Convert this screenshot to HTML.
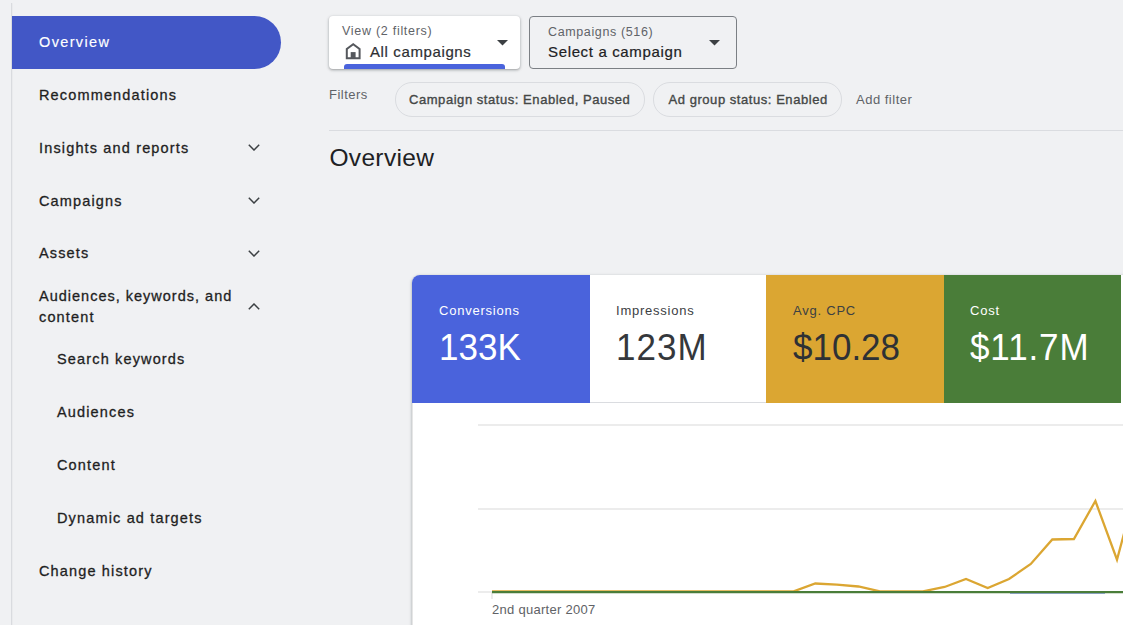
<!DOCTYPE html>
<html><head><meta charset="utf-8">
<style>
html,body{margin:0;padding:0;width:1123px;height:625px;overflow:hidden;background:#f0f1f3;font-family:"Liberation Sans",sans-serif;}
.a{position:absolute;white-space:nowrap;line-height:20px;}
#sideline{position:absolute;left:11px;top:2.5px;width:1px;height:623px;background:#d9dbdf;box-shadow:1px 0 1px rgba(0,0,0,0.03);}
#pill{position:absolute;left:12px;top:16px;width:269px;height:53px;background:#4257c6;border-radius:0 26.5px 26.5px 0;}
.nav{font-size:14.5px;letter-spacing:1.15px;color:#1f1f1f;-webkit-text-stroke:0.3px currentColor;}
.chev{position:absolute;left:248px;width:12px;height:7px;}
.card{position:absolute;background:#fff;}
</style></head><body>
<div id="sideline"></div>
<div id="pill"></div>
<div class="a nav" style="left:39px;top:32.3px;color:#fff;letter-spacing:1.35px;-webkit-text-stroke:0.15px #fff;">Overview</div>
<div class="a nav" style="left:39px;top:85.4px;">Recommendations</div>
<div class="a nav" style="left:39px;top:138px;">Insights and reports</div>
<div class="a nav" style="left:39px;top:190.7px;">Campaigns</div>
<div class="a nav" style="left:39px;top:243.4px;">Assets</div>
<div class="a nav" style="left:39px;top:285.7px;letter-spacing:1.0px;">Audiences, keywords, and</div>
<div class="a nav" style="left:39px;top:307.3px;">content</div>
<div class="a nav" style="left:57px;top:349px;">Search keywords</div>
<div class="a nav" style="left:57px;top:402.2px;">Audiences</div>
<div class="a nav" style="left:57px;top:455px;">Content</div>
<div class="a nav" style="left:57px;top:507.5px;">Dynamic ad targets</div>
<div class="a nav" style="left:39px;top:561.3px;">Change history</div>

<svg class="chev" style="top:144px" viewBox="0 0 12 7"><path d="M0.8 0.8 L6 6 L11.2 0.8" fill="none" stroke="#3c4043" stroke-width="1.5"/></svg>
<svg class="chev" style="top:197px" viewBox="0 0 12 7"><path d="M0.8 0.8 L6 6 L11.2 0.8" fill="none" stroke="#3c4043" stroke-width="1.5"/></svg>
<svg class="chev" style="top:250px" viewBox="0 0 12 7"><path d="M0.8 0.8 L6 6 L11.2 0.8" fill="none" stroke="#3c4043" stroke-width="1.5"/></svg>
<svg class="chev" style="top:303px" viewBox="0 0 12 7"><path d="M0.8 6.2 L6 1 L11.2 6.2" fill="none" stroke="#3c4043" stroke-width="1.5"/></svg>

<!-- dropdown 1 -->
<div style="position:absolute;left:329px;top:16px;width:191px;height:53px;background:#fff;border-radius:4px;box-shadow:0 1px 2px rgba(60,64,67,.3),0 1px 3px 1px rgba(60,64,67,.15);overflow:hidden;">
  <div style="position:absolute;left:15px;top:48px;width:161px;height:8px;background:#4a63dc;border-radius:3px 3px 0 0;"></div>
</div>
<div class="a" style="left:342px;top:21.3px;font-size:12.5px;color:#5f6368;letter-spacing:0.72px;">View (2 filters)</div>
<svg style="position:absolute;left:345px;top:43px;width:16px;height:17px" viewBox="0 0 16 17"><path d="M1.8 15.2 V6 L8.2 1.3 L14.6 6 V15.2 Z" fill="none" stroke="#55585d" stroke-width="2" stroke-linejoin="miter"/><rect x="5.7" y="9.1" width="4.9" height="6.1" fill="#55585d"/></svg>
<div class="a" style="left:370px;top:42.4px;font-size:15px;color:#2d2f33;letter-spacing:0.62px;-webkit-text-stroke:0.2px currentColor;">All campaigns</div>
<svg style="position:absolute;left:497px;top:40px;width:11px;height:6px" viewBox="0 0 11 6"><path d="M0 0 H11 L5.5 5.5 Z" fill="#3c4043"/></svg>

<!-- dropdown 2 -->
<div style="position:absolute;left:529px;top:16px;width:206px;height:51px;border:1px solid #7b7f84;border-radius:4px;"></div>
<div class="a" style="left:548px;top:22px;font-size:12.5px;color:#5f6368;letter-spacing:0.63px;">Campaigns (516)</div>
<div class="a" style="left:548px;top:41.6px;font-size:15px;color:#202124;letter-spacing:0.65px;-webkit-text-stroke:0.2px currentColor;">Select a campaign</div>
<svg style="position:absolute;left:709px;top:40px;width:11px;height:6px" viewBox="0 0 11 6"><path d="M0 0 H11 L5.5 5.5 Z" fill="#3c4043"/></svg>

<!-- filters -->
<div class="a" style="left:329px;top:84.5px;font-size:13px;color:#5f6368;letter-spacing:0.47px;">Filters</div>
<div style="position:absolute;left:395px;top:82px;width:248px;height:33px;border:1px solid #dadce0;border-radius:17px;"></div>
<div class="a" style="left:409px;top:90px;font-size:13px;color:#444746;letter-spacing:0.55px;-webkit-text-stroke:0.35px currentColor;">Campaign status: Enabled, Paused</div>
<div style="position:absolute;left:653px;top:82px;width:187px;height:33px;border:1px solid #dadce0;border-radius:17px;"></div>
<div class="a" style="left:668.5px;top:90px;font-size:13px;color:#444746;letter-spacing:0.55px;-webkit-text-stroke:0.35px currentColor;">Ad group status: Enabled</div>
<div class="a" style="left:856px;top:90px;font-size:13px;color:#5f6368;letter-spacing:0.5px;">Add filter</div>
<div style="position:absolute;left:329px;top:130px;width:794px;height:1px;background:#dadce0;"></div>

<div class="a" style="left:329.4px;top:143.8px;font-size:24.5px;color:#202124;letter-spacing:0.35px;line-height:28px;">Overview</div>

<!-- chart card -->
<div class="card" style="left:412px;top:275px;width:720px;height:360px;border-radius:8px 0 0 0;box-shadow:0 1px 2px rgba(60,64,67,.3),0 1px 3px 1px rgba(60,64,67,.15);overflow:hidden;">
  <div style="position:absolute;left:0;top:0;width:178px;height:128px;background:#4a63dc;"></div>
  <div style="position:absolute;left:178px;top:127px;width:176px;height:1px;background:#dadce0;"></div>
  <div style="position:absolute;left:0;top:128px;width:1px;height:300px;background:#e6e6e6;"></div>
  <div style="position:absolute;left:354px;top:0;width:178px;height:128px;background:#dba632;"></div>
  <div style="position:absolute;left:531.5px;top:0;width:177.5px;height:128px;background:#4a7d39;"></div>
</div>
<div class="a" style="left:439px;top:300.7px;font-size:13px;color:#fff;letter-spacing:0.77px;">Conversions</div>
<div class="a" style="left:439px;top:328px;font-size:35px;transform:scaleY(1.055);transform-origin:0 32px;color:#fff;line-height:40px;">133K</div>
<div class="a" style="left:616px;top:300.7px;font-size:13px;color:#3c4043;letter-spacing:0.77px;">Impressions</div>
<div class="a" style="left:616px;top:328px;font-size:35px;transform:scaleY(1.055);transform-origin:0 32px;color:#35383c;line-height:40px;letter-spacing:1px;">123M</div>
<div class="a" style="left:793px;top:300.7px;font-size:13px;color:#3c4043;letter-spacing:0.77px;">Avg. CPC</div>
<div class="a" style="left:793px;top:328px;font-size:35px;transform:scaleY(1.055);transform-origin:0 32px;color:#2e3135;line-height:40px;">$10.28</div>
<div class="a" style="left:970px;top:300.7px;font-size:13px;color:#fff;letter-spacing:0.77px;">Cost</div>
<div class="a" style="left:970px;top:328px;font-size:35px;transform:scaleY(1.055);transform-origin:0 32px;color:#fff;line-height:40px;letter-spacing:0.9px;">$11.7M</div>

<svg style="position:absolute;left:0;top:0;width:1123px;height:625px" viewBox="0 0 1123 625">
  <line x1="478" y1="425" x2="1123" y2="425" stroke="#e6e6e6" stroke-width="1.5"/>
  <line x1="478" y1="509" x2="1123" y2="509" stroke="#e6e6e6" stroke-width="1.5"/>
  <line x1="478" y1="592" x2="1123" y2="592" stroke="#e6e6e6" stroke-width="1.5"/>
  <line x1="492" y1="592" x2="492" y2="599" stroke="#e6e6e6" stroke-width="1.5"/>
  <polyline fill="none" stroke="#dba632" stroke-width="2.3" stroke-linejoin="miter" points="492,591.4 793.7,591.4 815.3,583.5 836.8,584.7 858.4,586.5 879.9,591.4 901.5,591.4 923,591.4 944.6,587 966,579 987.7,588 1009,579 1030.8,564 1052.3,539.5 1073.9,539 1095.4,501 1117,559.7 1138.5,480"/>
  <line x1="1010" y1="593.2" x2="1105" y2="593.2" stroke="#7088e0" stroke-width="1"/><polyline fill="none" stroke="#4a7d39" stroke-width="2.2" points="492,592.1 1123,592.1"/>
</svg>
<div class="a" style="left:492px;top:600px;font-size:13px;color:#606266;letter-spacing:0.28px;">2nd quarter 2007</div>
</body></html>
